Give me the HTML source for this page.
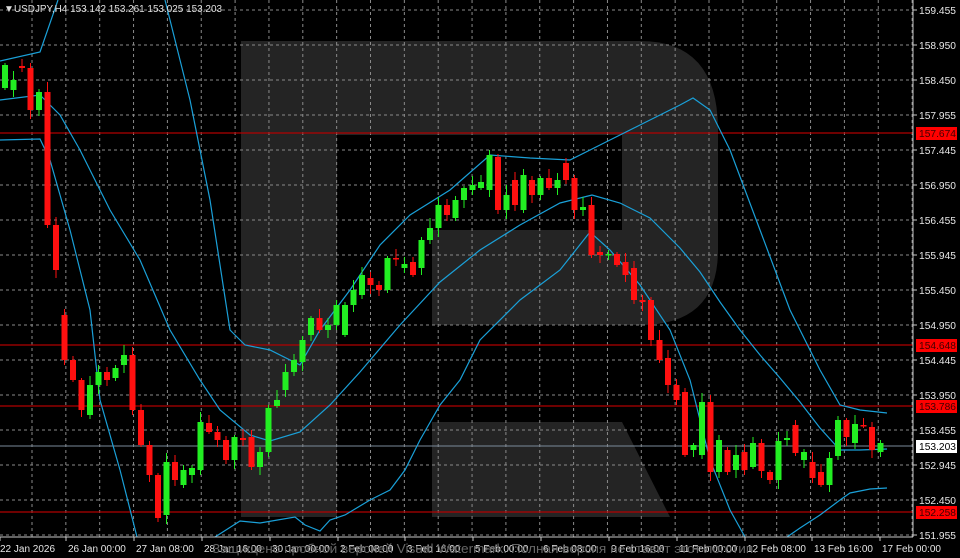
<!DOCTYPE html>
<html><head><meta charset="utf-8"><style>
html,body{margin:0;padding:0;background:#000;width:960px;height:558px;overflow:hidden}
svg{display:block;font-family:"Liberation Sans",sans-serif}
</style></head><body>
<svg id="s" width="960" height="558" viewBox="0 0 960 558" xmlns="http://www.w3.org/2000/svg">
<rect width="960" height="558" fill="#000"/>
<path d="M241,41 H640 Q718,41 718,130 V250 Q718,325 640,325 H432 V230 H622 V135 H337 V517 H241 Z" fill="#242424"/>
<path d="M432,422 H622 L670,517 H432 Z" fill="#242424"/>
<g id="grid" stroke="#8a8a8a" stroke-width="1" stroke-dasharray="3,3"></g>
<g stroke="#b00000" stroke-width="1.2">
<line x1="0" y1="133" x2="913" y2="133"/><line x1="0" y1="345" x2="913" y2="345"/>
<line x1="0" y1="406" x2="913" y2="406"/><line x1="0" y1="512" x2="913" y2="512"/>
</g>
<line x1="0" y1="446" x2="913" y2="446" stroke="#7a8a9a" stroke-width="1"/>
<g fill="none" stroke="#1aa0d8" stroke-width="1.2">
<polyline points="0,61 40,52 58,0"/>
<polyline points="165,0 190,100 210,200 230,330 245,345 270,350 300,365 320,330 350,290 380,245 410,215 450,190 490,155 530,158 570,160 600,145 640,125 680,105 693,98 710,110 730,150 760,230 790,310 820,370 840,405 860,410 887,413"/>
<polyline points="0,100 40,95 60,115 80,150 110,210 140,260 170,330 200,380 220,410 250,435 270,441 300,432 330,405 360,372 400,325 440,282 480,250 520,225 560,203 592,195 620,203 650,218 680,248 700,272 720,302 740,330 760,355 780,378 800,402 820,428 840,450 860,450 887,449"/>
<polyline points="0,140 40,139 50,160 70,230 90,310 100,400 120,470 137,537"/>
<polyline points="215,537 240,521 260,523 295,517 305,525 320,531 330,520 345,515 370,500 390,490 405,470 420,440 440,405 460,380 480,340 520,300 560,270 590,232 610,250 640,285 670,330 690,380 710,460 730,510 745,537"/>
<polyline points="787,537 800,528 820,515 840,500 850,493 870,489 887,488"/>
</g>
<g id="c"></g>
<line x1="913" y1="0" x2="913" y2="537" stroke="#c8c8c8"/>
<line x1="0" y1="537" x2="913" y2="537" stroke="#c8c8c8"/>
<g id="ax" font-size="10" fill="#e6e6e6"></g>
<text x="4" y="12" font-size="10" fill="#e0e0e0">▼</text>
<text x="14" y="12" font-size="10" fill="#e0e0e0" textLength="208" lengthAdjust="spacingAndGlyphs">USDJPY,H4  153.142 153.261 153.025 153.203</text>
<text x="212" y="553" font-size="13" fill="#666" textLength="545" lengthAdjust="spacingAndGlyphs">Защищено пробной версией Visual Watermark. Полная версия не ставит этот логотип.</text>
</svg>
<script>
var NS="http://www.w3.org/2000/svg";
function el(p,t,a,tx){var e=document.createElementNS(NS,t);for(var k in a)e.setAttribute(k,a[k]);if(tx)e.textContent=tx;p.appendChild(e);return e;}
var g=document.getElementById('grid');
for(var y=10;y<537;y+=35)el(g,'line',{x1:0,y1:y,x2:913,y2:y});
for(var x=32;x<913;x+=33.85)el(g,'line',{x1:x,y1:0,x2:x,y2:537});
var d=[[88,65],[90,80],[66,68],[68,110],[110,92],[92,225],[225,270],[315,360],[360,380],[380,410],[415,385],[385,372],[372,380],[378,368],[365,355],[355,410],[410,445],[445,475],[475,518],[515,462],[462,480],[485,470],[475,468],[470,422],[423,432],[432,440],[440,460],[460,437],[438,440],[437,467],[467,452],[452,408],[406,400],[390,372],[372,360],[362,340],[335,318],[318,330],[330,325],[325,305],[335,305],[305,290],[295,275],[278,285],[285,290],[290,258],[258,258],[268,264],[262,275],[268,240],[240,228],[228,205],[205,215],[218,200],[200,188],[190,185],[188,182],[190,155],[157,210],[210,195],[180,205],[210,175],[180,195],[195,178],[178,188],[188,180],[163,180],[178,210],[210,207],[205,255],[252,255],[255,254],[254,265],[262,275],[268,300],[300,302],[300,340],[340,360],[358,385],[385,400],[392,455],[450,445],[455,402],[402,472],[472,440],[450,472],[470,455],[452,470],[467,443],[443,471],[472,480],[480,441],[440,438],[425,453],[460,452],[462,478],[472,485],[485,458],[456,420],[420,437],[443,424],[425,425],[427,450],[452,443]];
var c=document.getElementById('c');
for(var i=0;i<d.length;i++){var o=d[i][0],cl=d[i][1],xx=5+i*8.5;var up=cl<o;var col=up?'#22ee22':'#ff1010';
var t=Math.min(o,cl),b=Math.max(o,cl);var k1=2+((i*7)%9),k2=2+((i*5)%8);
el(c,'line',{x1:xx,y1:t-k1,x2:xx,y2:b+k2,stroke:col,'stroke-width':1});
el(c,'rect',{x:xx-3,y:t,width:6,height:Math.max(1.5,b-t),fill:col});}
var ax=document.getElementById('ax');
var L=['159.455','158.950','158.450','157.955','157.445','156.950','156.455','155.945','155.450','154.950','154.445','153.950','153.455','152.945','152.450','151.955'];
for(var j=0;j<L.length;j++){var yy=10+j*35;el(ax,'line',{x1:913,y1:yy,x2:917,y2:yy,stroke:'#c8c8c8'});el(ax,'text',{x:919,y:yy+4,textLength:37,lengthAdjust:'spacingAndGlyphs'},L[j]);}
var R=[['157.674',133],['154.648',345],['153.786',406],['152.258',512]];
R.forEach(function(r){el(ax,'rect',{x:916,y:r[1]-6,width:41,height:13,fill:'#ff0000'});el(ax,'text',{x:919,y:r[1]+4,fill:'#400000',textLength:37,lengthAdjust:'spacingAndGlyphs'},r[0]);});
el(ax,'rect',{x:916,y:440,width:41,height:13,fill:'#ffffff'});el(ax,'text',{x:919,y:450,fill:'#000',textLength:37,lengthAdjust:'spacingAndGlyphs'},'153.203');
var T=[['22 Jan 2026',0],['26 Jan 00:00',66],['27 Jan 08:00',134],['28 Jan 16:00',202],['30 Jan 00:00',270],['2 Feb 08:00',338],['3 Feb 16:00',405],['5 Feb 00:00',473],['6 Feb 08:00',541],['9 Feb 16:00',609],['11 Feb 00:00',677],['12 Feb 08:00',745],['13 Feb 16:00',812],['17 Feb 00:00',880]];
T.forEach(function(t){el(ax,'line',{x1:t[1],y1:537,x2:t[1],y2:541,stroke:'#c8c8c8'});el(ax,'text',{x:t[1]+(t[1]?2:0),y:552},t[0]);});
</script>
</body></html>
